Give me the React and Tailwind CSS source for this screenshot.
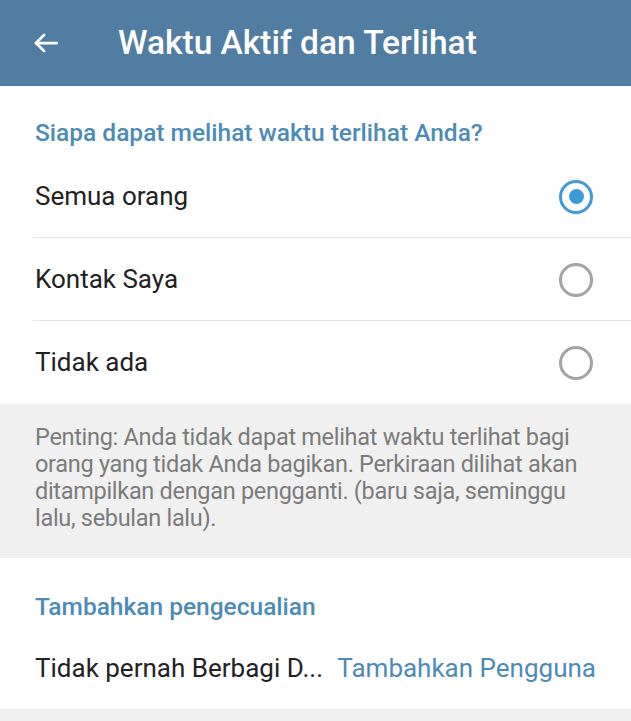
import React, { useState } from "react";

const options = [
  { key: "everybody", label: "Semua orang" },
  { key: "contacts", label: "Kontak Saya" },
  { key: "nobody", label: "Tidak ada" },
];

function Radio({ checked }) {
  return (
    <span
      className={
        "flex h-[34px] w-[34px] items-center justify-center rounded-full border-[3px] " +
        (checked ? "border-[#3d9ad8]" : "border-[#a3a3a3]")
      }
    >
      {checked && <span className="h-[15px] w-[15px] rounded-full bg-[#3d9ad8]" />}
    </span>
  );
}

export default function App() {
  const [value, setValue] = useState("everybody");

  return (
    <div
      className="min-h-[721px] w-full bg-white"
      style={{ fontFamily: "Roboto, 'Noto Sans', sans-serif" }}
    >
      {/* toolbar */}
      <header className="flex h-[86px] items-center bg-[#517da2] shadow-[0_1px_2px_rgba(0,0,0,0.12)]">
        <button className="ml-[30px] flex h-8 w-8 items-center justify-center text-white">
          <svg width="30" height="30" viewBox="0 0 24 24" fill="none" stroke="currentColor" strokeWidth="2.2" strokeLinecap="round" strokeLinejoin="round">
            <path d="M20.5 12H4" />
            <path d="M10.5 5.5L4 12l6.5 6.5" />
          </svg>
        </button>
        <h1 className="ml-[56px] text-[33.5px] font-medium text-white">
          Waktu Aktif dan Terlihat
        </h1>
      </header>

      {/* who can see */}
      <section className="bg-white">
        <h2 className="px-[35px] pt-[29px] pb-[4px] text-[24.5px] font-medium leading-[36px] text-[#4c8bb8]">
          Siapa dapat melihat waktu terlihat Anda?
        </h2>
        {options.map((o, i) => (
          <button
            key={o.key}
            onClick={() => setValue(o.key)}
            className="relative flex h-[83px] w-full items-center justify-between pr-[38px] pl-[35px] text-left"
          >
            <span className="text-[26px] text-[#222222]">{o.label}</span>
            <Radio checked={value === o.key} />
            {i < options.length - 1 && (
              <span className="absolute right-0 bottom-0 left-[33px] h-px bg-[#e3e3e3]" />
            )}
          </button>
        ))}
      </section>

      {/* info */}
      <div className="h-[154px] bg-[#f0f0f0] pt-[20px] pr-[28px] pl-[35px] text-[23.5px] leading-[27px] tracking-[-0.3px] text-[#7b7b7b]">
        Penting: Anda tidak dapat melihat waktu terlihat bagi orang yang tidak Anda bagikan.
        Perkiraan dilihat akan ditampilkan dengan pengganti. (baru saja, seminggu lalu, sebulan lalu).
      </div>

      {/* exceptions */}
      <section className="bg-white">
        <h2 className="px-[35px] pt-[31px] text-[24.5px] font-medium leading-[36px] text-[#4c8bb8]">
          Tambahkan pengecualian
        </h2>
        <div className="flex h-[84px] items-center justify-between pt-[3px] pr-[35px] pl-[35px]">
          <span className="text-[26px] text-[#222222]">Tidak pernah Berbagi D...</span>
          <span className="text-[26px] text-[#4c8bb8]">Tambahkan Pengguna</span>
        </div>
      </section>
      <div className="h-[14px] bg-[#f0f0f0]" />
    </div>
  );
}
